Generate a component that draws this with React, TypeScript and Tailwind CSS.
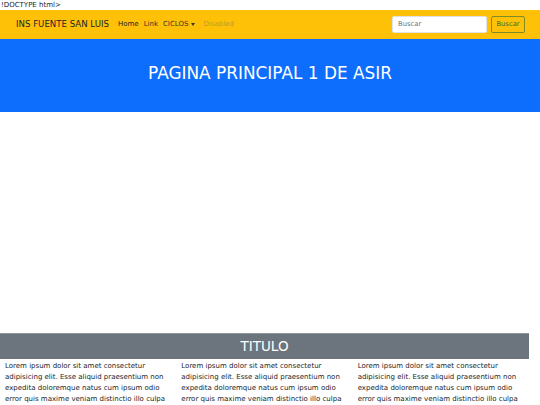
import React from "react";

const lorem =
  "Lorem ipsum dolor sit amet consectetur adipisicing elit. Esse aliquid praesentium non expedita doloremque natus cum ipsum odio error quis maxime veniam distinctio illo culpa dolorum id, neque libero consequuntur.";

export default function App() {
  return (
    <div className="w-[540px] h-[405px] overflow-hidden bg-white text-[#212529]" style={{ fontFamily: '"DejaVu Sans", sans-serif' }}>
      <div className="h-[10px] text-[7px] leading-[10px] pl-[1px]">!DOCTYPE html&gt;</div>
      <nav className="h-[29px] bg-[#ffc107] flex items-center pl-[16px] pr-[15px]">
        <span className="text-[8.6px] text-[#212529] mr-[9px]">INS FUENTE SAN LUIS</span>
        <div className="flex items-center gap-[5px] text-[7px]">
          <span className="text-[#212529]">Home</span>
          <span className="text-[#3d3520]">Link</span>
          <span className="flex items-center text-[#3d3520]">
            CICLOS
            <span className="ml-[3px] w-0 h-0 border-l-[2.5px] border-r-[2.5px] border-t-[3px] border-l-transparent border-r-transparent border-t-[#3d3520]" />
          </span>
          <span className="ml-[3px] text-[#c09a2a]">Disabled</span>
        </div>
        <div className="ml-auto flex items-center gap-[4px]">
          <div className="w-[95px] h-[17px] bg-white rounded-[2px] border border-[#dee2e6] flex items-center pl-[5px] text-[6.8px] text-[#6c757d]">Buscar</div>
          <div className="w-[34px] h-[17px] rounded-[2px] border border-[#7d8c26] flex items-center justify-center text-[6.8px] text-[#3d6b2e]">Buscar</div>
        </div>
      </nav>
      <div className="h-[73px] bg-[#0d6efd] flex items-center justify-center pb-[4px]">
        <h1 className="text-[16.9px] text-white font-normal">PAGINA PRINCIPAL 1 DE ASIR</h1>
      </div>
      <div className="h-[221px]" />
      <div className="w-[529px]">
        <div className="h-[26px] bg-[#6c757d] flex items-center justify-center border-t border-[#8d959c]">
          <span className="text-[13.5px] text-white">TITULO</span>
        </div>
        <div className="grid grid-cols-3">
          {[0, 1, 2].map((i) => (
            <p key={i} className="pl-[5px] pt-[2px] text-[7px] leading-[10.9px] text-[#212529]">
              {lorem}
            </p>
          ))}
        </div>
      </div>
    </div>
  );
}
